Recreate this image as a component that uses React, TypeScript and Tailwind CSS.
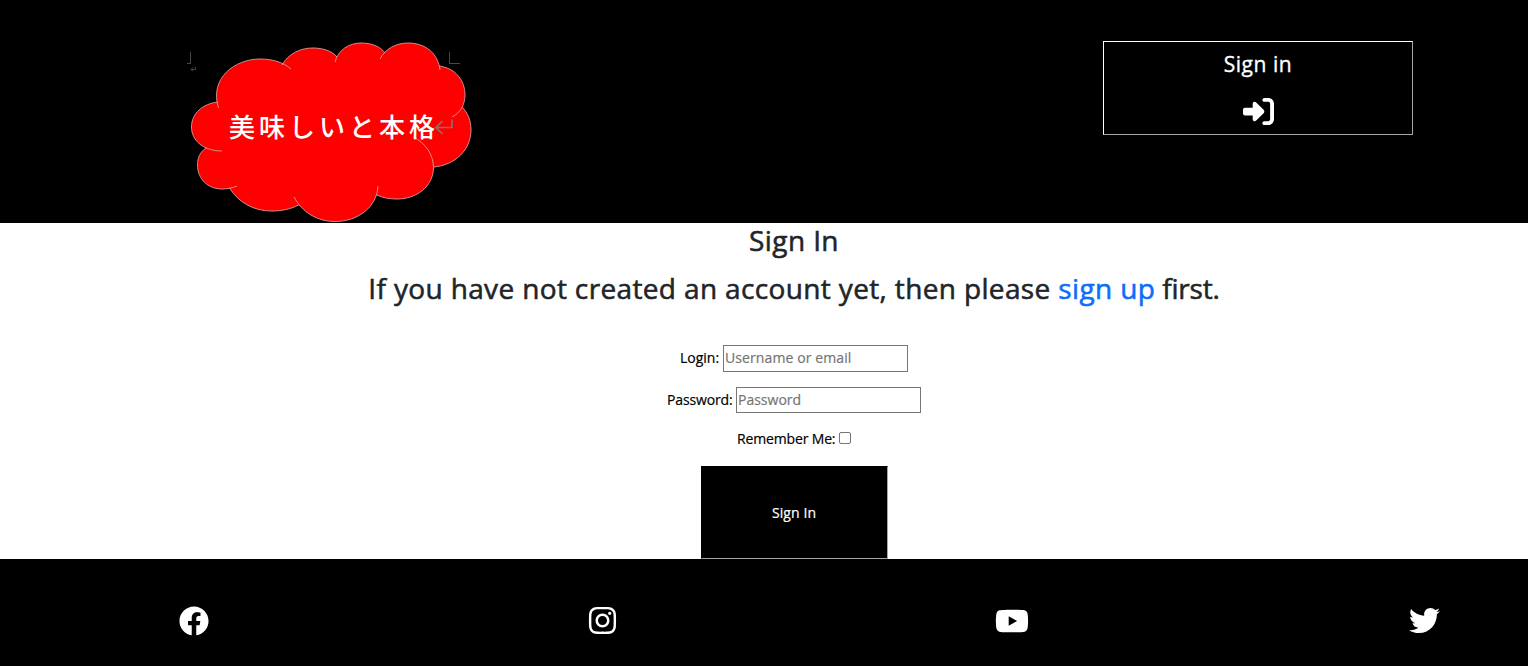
import { FaFacebook, FaInstagram, FaYoutube, FaTwitter } from "react-icons/fa";
import { FaRightToBracket } from "react-icons/fa6";

const lobes = [
  "M218.5 108C209 78 235 59 260 59C272 59 283 62 291 69",
  "M282 65C289 53 301 48 313 48C323 48 332 51 337 57",
  "M335 62C338 50 349 43 361 43C371 43 380 46 385 53",
  "M380 59C385 49 396 43 408 43C425 43 438 53 440 70",
  "M439 66C455 68 465 80 465 95C465 105 460 113 452 117",
  "M462 107C468 113 471 121 471 130C471 150 455 165 434 167",
  "M413 137C426 143 433.500 155 433.500 168C433 187 416 199 397 199C390 199 383 198 377 195",
  "M378 186C377 207 358 221.500 335 221.500C317 221.500 302 212 294 197",
  "M298.500 205C291 209 282 211 272 211C254 211 239 203 229.500 188",
  "M237 186C232 188 227 189 222 189C208 189 197.500 179 197.500 165C197.500 158 200 152 206 148",
  "M222 151C204 151 191.500 141 191.500 127C191.500 113 203 104 217.500 102",
];

function Logo() {
  return (
    <svg viewBox="180 35 300 188" className="h-[188px] w-[300px]" role="img">
      <path
        fill="#f00"
        stroke="#f00"
        strokeWidth="1.4"
        strokeLinejoin="round"
        d="M217.500 102L218.500 108L282 65L337 57L385 53L440 67L462 107L434 167L377 195L298.500 205L229.500 188L206 148Z"
      />
      {lobes.map((d) => (
        <path key={d} d={d} fill="#f00" />
      ))}
      {lobes.map((d) => (
        <path key={d} d={d} fill="none" stroke="#d69c9c" strokeWidth="0.9" />
      ))}
      <g fill="none" stroke="#4a4a4a" strokeWidth="1">
        <path d="M190.500 52V63.500H187" />
        <path d="M449.500 52V63.500H460" />
        <path d="M195.500 67V69.500H191M193 67.500L191 69.500L193 71" stroke="#444" />
      </g>
      <path
        d="M452 119.500V127.500H436M442.500 121L436 127.500L442.500 134"
        fill="none"
        stroke="#8c7070"
        strokeWidth="1.600"
      />
      <text
        x="229"
        y="137"
        fontSize="26"
        fontWeight="500"
        textLength="206"
        fill="#fff"
        className="font-['Noto_Sans_CJK_JP',sans-serif]"
      >
        美味しいと本格
      </text>
    </svg>
  );
}

export default function App() {
  return (
    <div className="flex h-[666px] flex-col bg-white font-['Open_Sans',sans-serif] text-black [-webkit-text-stroke:0.2px]">
      <header className="flex h-[223px] shrink-0 items-start justify-between bg-black pl-[180px] pr-[115px]">
        <div className="pt-[35px]">
          <Logo />
        </div>
        <button className="mt-[41px] flex h-[94px] w-[310px] flex-col items-center border border-b-[#a6a6a6] border-l-white border-r-[#a6a6a6] border-t-white pt-[7px] text-white">
          <span className="text-[21px] leading-[30px] tracking-[0.55px] [-webkit-text-stroke:0.35px]">Sign in</span>
          <FaRightToBracket className="mt-[17px] size-[31px]" />
        </button>
      </header>

      <main className="flex h-[336px] shrink-0 flex-col items-center pl-[60px]">
        <h2 className="h-[48px] whitespace-nowrap text-[28px] leading-[34px] tracking-[0.4px] text-[#212529] [-webkit-text-stroke:0.55px]">
          Sign In
        </h2>
        <h2 className="h-[74px] whitespace-nowrap text-[28px] leading-[34px] tracking-[0.36px] text-[#212529] [-webkit-text-stroke:0.55px]">
          If you have not created an account yet, then please{" "}
          <a href="#" className="text-[#0d6efd]">sign up</a>
          <span className="tracking-[-0.2px]"> first.</span>
        </h2>
        <form className="flex flex-col items-center text-[14px]">
          <label className="flex h-[27px] items-center gap-[4px]">
            <span className="relative -top-px w-[39px] whitespace-nowrap">Login:</span>
            <input
              placeholder="Username or email"
              className="h-[27px] w-[185px] border border-[#767676] px-[1px] pb-[2px] tracking-[0.1px] placeholder:text-[#757575]"
            />
          </label>
          <label className="mt-[15px] flex h-[26px] items-center gap-[4px]">
            <span className="relative -top-px w-[65px] whitespace-nowrap tracking-[-0.15px]">Password:</span>
            <input
              placeholder="Password"
              className="h-[26px] w-[185px] border border-[#767676] px-[1px] pb-[2px] placeholder:text-[#757575]"
            />
          </label>
          <label className="mt-[15px] flex h-[22px] items-center gap-[3px]">
            <span className="relative -top-px w-[99px] whitespace-nowrap tracking-[-0.15px]">Remember Me:</span>
            <input
              type="checkbox"
              className="mb-[2px] size-[12px] appearance-none rounded-[2px] border border-[#767676] bg-white"
            />
          </label>
          <button
            type="button"
            className="mt-[16px] h-[93px] w-[187px] border border-b-[#a6a6a6] border-l-black border-r-[#a6a6a6] border-t-black bg-black pb-[1px] tracking-[0.1px] text-white"
          >
            Sign In
          </button>
        </form>
      </main>

      <footer className="flex h-[107px] shrink-0 items-center justify-between bg-black pl-[179px] pr-[88px] pt-[16px] text-white">
        <FaFacebook className="size-[30px]" />
        <FaInstagram className="ml-[1px] size-[31px]" />
        <FaYoutube className="mr-[3px] h-[32px] w-[34px]" />
        <FaTwitter className="size-[31px]" />
      </footer>
    </div>
  );
}
